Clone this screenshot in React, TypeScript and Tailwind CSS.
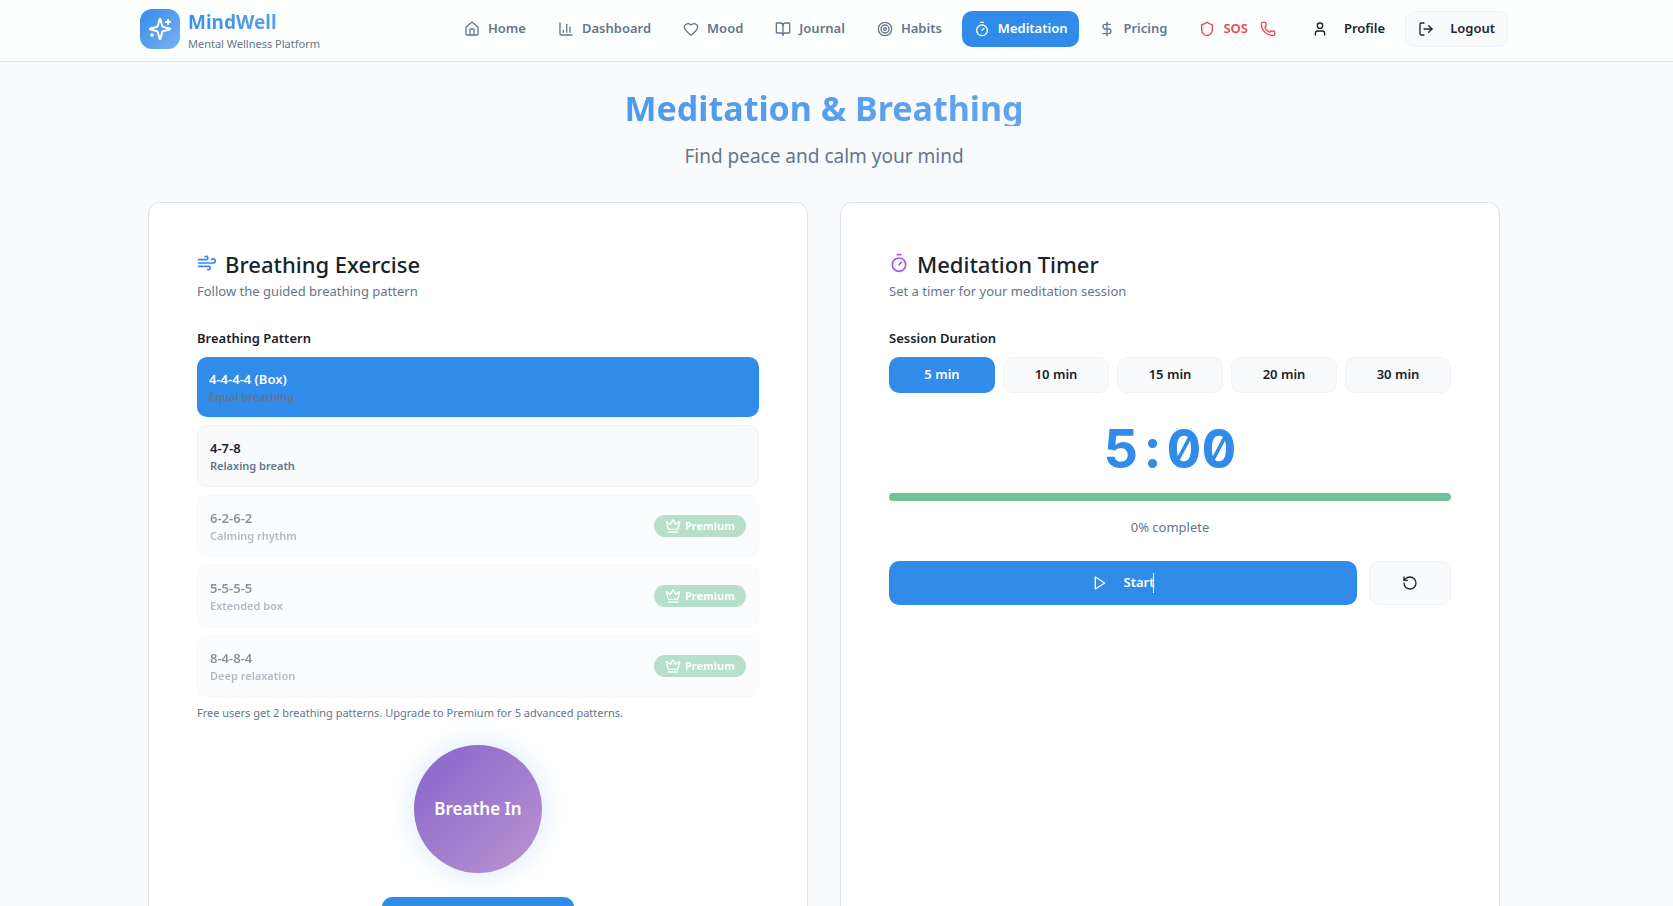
import type { ReactNode } from "react";
import {
  BookOpen,
  ChartColumn,
  Crown,
  DollarSign,
  Heart,
  House,
  LogOut,
  Phone,
  RotateCcw,
  Shield,
  Target,
  Timer,
  User,
  Wind,
} from "lucide-react";

const links = [
  { label: "Home", icon: House },
  { label: "Dashboard", icon: ChartColumn },
  { label: "Mood", icon: Heart },
  { label: "Journal", icon: BookOpen },
  { label: "Habits", icon: Target },
  { label: "Meditation", icon: Timer, active: true },
  { label: "Pricing", icon: DollarSign },
];

const patterns = [
  { name: "4-4-4-4 (Box)", note: "Equal breathing", active: true },
  { name: "4-7-8", note: "Relaxing breath" },
  { name: "6-2-6-2", note: "Calming rhythm", premium: true },
  { name: "5-5-5-5", note: "Extended box", premium: true },
  { name: "8-4-8-4", note: "Deep relaxation", premium: true },
];

const durations = [5, 10, 15, 20, 30];

function PlayIcon() {
  return (
    <svg width="16" height="16" viewBox="0 0 24 24" fill="none" stroke="currentColor" strokeWidth="2" strokeLinecap="round" strokeLinejoin="round">
      <path d="M5 3l14 9-14 9V3z" />
    </svg>
  );
}

function SparklesIcon() {
  return (
    <svg width="24" height="24" viewBox="0 0 24 24" fill="none" stroke="currentColor" strokeWidth="2" strokeLinecap="round" strokeLinejoin="round">
      <path d="M9.937 15.5A2 2 0 0 0 8.5 14.063l-6.135-1.582a.5.5 0 0 1 0-.962L8.5 9.936A2 2 0 0 0 9.937 8.5l1.582-6.135a.5.5 0 0 1 .963 0L14.063 8.5A2 2 0 0 0 15.5 9.937l6.135 1.581a.5.5 0 0 1 0 .964L15.5 14.063a2 2 0 0 0-1.437 1.437l-1.582 6.135a.5.5 0 0 1-.963 0z" />
      <path d="M20 3v4" />
      <path d="M22 5h-4" />
      <path d="M4 17v2" />
      <path d="M5 18H3" />
    </svg>
  );
}

function Header() {
  return (
    <header className="border-b border-[#dfe3ea] bg-[#fdfefe] pr-[25px]">
      <div className="mx-auto flex h-[61px] max-w-[1400px] items-start justify-between px-4">
        <a href="#" className="flex items-start gap-2 pt-2">
          <span className="mt-px flex size-10 items-center justify-center rounded-xl bg-linear-to-br from-[#318ce9] to-[#78b1f1] text-white">
            <SparklesIcon />
          </span>
          <span className="flex flex-col">
            <span className="bg-linear-to-r from-[#378fe9] to-[#68a9ef] bg-clip-text text-[19px] leading-7 font-bold text-transparent">
              MindWell
            </span>
            <span className="text-[11px] leading-4 text-[#65758b]">Mental Wellness Platform</span>
          </span>
        </a>
        <nav className="flex items-center gap-2 pt-[11px] text-[13px] font-semibold text-[#65758b]">
          {links.map(({ label, icon: Icon, active }) => (
            <a
              key={label}
              href="#"
              className={`flex h-9 items-center gap-2 rounded-[10px] px-3 ${active ? "bg-[#318ce9] text-white" : ""}`}
            >
              <Icon size={16} />
              {label}
            </a>
          ))}
          <a href="#" className="mr-1 flex h-9 items-center gap-2 px-3 text-[#ea4848]">
            <Shield size={16} />
            SOS
            <Phone size={16} className="ml-1" />
          </a>
          <a href="#" className="flex h-9 items-center gap-4 px-3 text-[#1e252e]">
            <User size={16} />
            Profile
          </a>
          <button className="flex h-9 items-center gap-4 rounded-[10px] border border-[#f0f2f6] bg-[#f9fafc] px-3 text-[#1e252e]">
            <LogOut size={16} />
            Logout
          </button>
        </nav>
      </div>
    </header>
  );
}

function Card({ icon, title, text, children }: { icon: ReactNode; title: string; text: string; children: ReactNode }) {
  return (
    <section className="rounded-xl border border-[#dfe3ea] bg-white px-12 pt-11 pb-12">
      <h2 className="flex items-start gap-2 text-[22px] leading-[34px] font-medium text-[#1a222b]">
        <span className="pt-[6px]">{icon}</span>
        {title}
      </h2>
      <p className="text-[13px] leading-5 text-[#65758b]">{text}</p>
      {children}
    </section>
  );
}

function BreathingCard() {
  return (
    <Card
      icon={<Wind size={20} className="text-[#3b82f6]" />}
      title="Breathing Exercise"
      text="Follow the guided breathing pattern"
    >
      <h3 className="mt-[26px] text-[13px] leading-[22px] font-semibold text-[#1a222b]">Breathing Pattern</h3>
      <div className="mt-2 flex flex-col gap-2">
        {patterns.map((p) => (
          <button
            key={p.name}
            disabled={p.premium}
            className={`flex items-center justify-between rounded-[10px] p-3 text-left font-semibold disabled:opacity-50 ${
              p.active ? "bg-[#318ce9] text-white" : "border border-[#f0f2f6] bg-[#f9fafc] text-[#1a222b]"
            }`}
          >
            <span className="flex flex-col">
              <span className="text-[13px] leading-5">{p.name}</span>
              <span className="text-[11px] leading-4 text-[#65758b]">{p.note}</span>
            </span>
            {p.premium && (
              <span className="flex h-[22px] items-center gap-1 rounded-full bg-[#70c399] px-[11px] text-[11px] font-bold text-white">
                <Crown size={16} />
                Premium
              </span>
            )}
          </button>
        ))}
      </div>
      <p className="mt-2 text-[11px] leading-4 text-[#65758b]">
        Free users get 2 breathing patterns. Upgrade to Premium for 5 advanced patterns.
      </p>
      <div className="mt-6 flex flex-col items-center gap-6">
        <div className="flex size-32 items-center justify-center rounded-full bg-linear-to-br from-[#8664cc] to-[#bd93cf] text-[17px] font-semibold text-white shadow-[0_0_30px_rgba(49,140,233,0.2)]">
          Breathe In
        </div>
        <button aria-label="Start breathing" className="flex h-12 w-48 items-center justify-center rounded-[10px] bg-[#318ce9] text-white">
          <PlayIcon />
        </button>
      </div>
    </Card>
  );
}

function TimerCard() {
  return (
    <Card
      icon={<Timer size={20} className="text-[#a855f7]" />}
      title="Meditation Timer"
      text="Set a timer for your meditation session"
    >
      <h3 className="mt-[26px] text-[13px] leading-[22px] font-semibold text-[#1a222b]">Session Duration</h3>
      <div className="mt-2 grid grid-cols-5 gap-2">
        {durations.map((d) => (
          <button
            key={d}
            className={`h-9 rounded-[10px] text-[13px] font-semibold ${
              d === 5 ? "bg-[#318ce9] text-white" : "border border-[#f0f2f6] bg-[#f9fafc] text-[#1a222b]"
            }`}
          >
            {d} min
          </button>
        ))}
      </div>
      <div className="mt-[26px] flex justify-center text-center font-['Inter',monospace] text-[54px] leading-[60px] font-bold text-[#318ce9] slashed-zero tabular-nums">
        <span>5</span>
        <span className="w-7">:</span>
        <span>00</span>
      </div>
      <div role="progressbar" aria-label="Session progress" aria-valuenow={0} className="mt-[14px] h-2 rounded-full bg-[#70c399]" />
      <p className="mt-4 text-center text-[13px] leading-5 text-[#65758b]">0% complete</p>
      <div className="mt-6 flex gap-3">
        <button className="flex h-11 flex-1 items-center justify-center gap-4 rounded-[10px] bg-[#318ce9] text-[13px] font-semibold text-white">
          <PlayIcon />
          <span className="relative">
            Start
            <span className="absolute top-0 right-0 h-5 w-px bg-white" />
          </span>
        </button>
        <button aria-label="Reset" className="flex h-11 w-[82px] items-center justify-center rounded-[10px] border border-[#f0f2f6] bg-[#f9fafc] text-[#1a222b]">
          <RotateCcw size={16} />
        </button>
      </div>
    </Card>
  );
}

export default function App() {
  return (
    <div className="h-screen overflow-hidden bg-[#f9fafc] font-['Noto_Sans','Open_Sans',sans-serif]">
      <Header />
      <main className="pr-[25px]">
        <div className="mx-auto max-w-[1400px] px-6 pt-7">
          <h1 className="bg-linear-to-r from-[#318ce9] to-[#78b1f1] bg-clip-text text-center text-[34px] leading-9 font-bold text-transparent">
            Meditation &amp; Breathing
          </h1>
          <p className="mt-4 text-center text-[19px] leading-7 text-[#65758b]">Find peace and calm your mind</p>
          <div className="mt-8 grid grid-cols-2 gap-8">
            <BreathingCard />
            <TimerCard />
          </div>
        </div>
      </main>
    </div>
  );
}
